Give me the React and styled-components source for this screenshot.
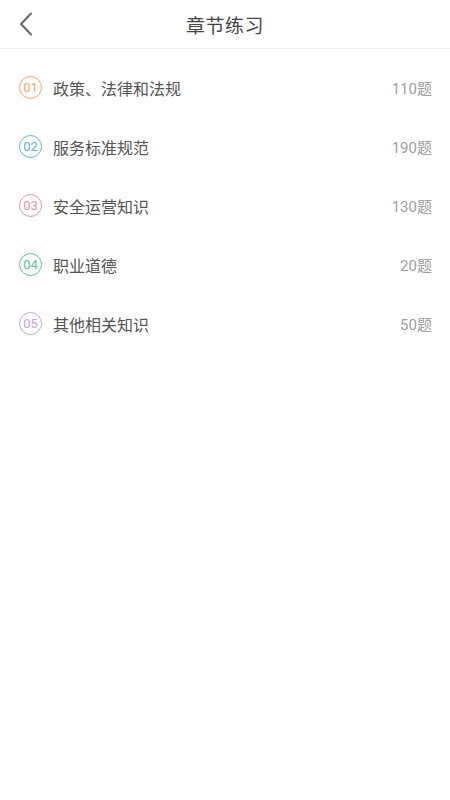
import React from 'react'
import styled, { createGlobalStyle } from 'styled-components'

const GlobalStyle = createGlobalStyle`
  html, body {
    margin: 0;
    padding: 0;
    background: #fff;
  }
  body {
    font-family: "Noto Sans CJK SC", "Liberation Sans", sans-serif;
  }
`

const chapters = [
  { no: '01', title: '政策、法律和法规', count: 110, color: '#f2a56b' },
  { no: '02', title: '服务标准规范', count: 190, color: '#5bb3cf' },
  { no: '03', title: '安全运营知识', count: 130, color: '#e394ab' },
  { no: '04', title: '职业道德', count: 20, color: '#62bf8f' },
  { no: '05', title: '其他相关知识', count: 50, color: '#c7a2d8' },
]

const App = () => {
  return (
    <>
      <GlobalStyle />
      <Page>
        <Header>
          <BackButton aria-label="back">
            <svg width="14" height="24" viewBox="0 0 14 24" fill="none">
              <path d="M12 1.5 L2 12 L12 22.5" stroke="#666" strokeWidth="2" strokeLinecap="round" strokeLinejoin="round" />
            </svg>
          </BackButton>
          <Title>章节练习</Title>
        </Header>
        <List>
          {chapters.map((c) => (
            <Row key={c.no}>
              <Badge color={c.color}>{c.no}</Badge>
              <Name>{c.title}</Name>
              <Count>{c.count}题</Count>
            </Row>
          ))}
        </List>
      </Page>
    </>
  )
}

export default App

const Page = styled.div`
  width: 450px;
  min-height: 800px;
  background: #fff;
`

const Header = styled.header`
  position: relative;
  height: 48px;
  display: flex;
  align-items: center;
  justify-content: center;
  border-bottom: 1px solid #efefef;
`

const BackButton = styled.div`
  position: absolute;
  left: 19px;
  top: 12px;
  display: flex;
`

const Title = styled.h1`
  margin: 0;
  font-size: 19px;
  font-weight: 400;
  color: #444;
  letter-spacing: 0.5px;
`

const List = styled.ul`
  list-style: none;
  margin: 0;
  padding: 9px 18px 0 19px;
`

const Row = styled.li`
  height: 59px;
  display: flex;
  align-items: center;
`

const Badge = styled.span`
  box-sizing: border-box;
  width: 23px;
  height: 23px;
  border-radius: 50%;
  border: 1px solid ${(p) => p.color};
  color: ${(p) => p.color};
  font-family: Roboto, "Liberation Sans", sans-serif;
  font-weight: 400;
  font-size: 13px;
  display: flex;
  align-items: center;
  justify-content: center;
  margin-right: 11px;
`

const Name = styled.span`
  flex: 1;
  font-size: 16px;
  color: #555;
`

const Count = styled.span`
  font-family: Roboto, "Noto Sans CJK SC", sans-serif;
  font-size: 15px;
  color: #a0a0a0;
`
